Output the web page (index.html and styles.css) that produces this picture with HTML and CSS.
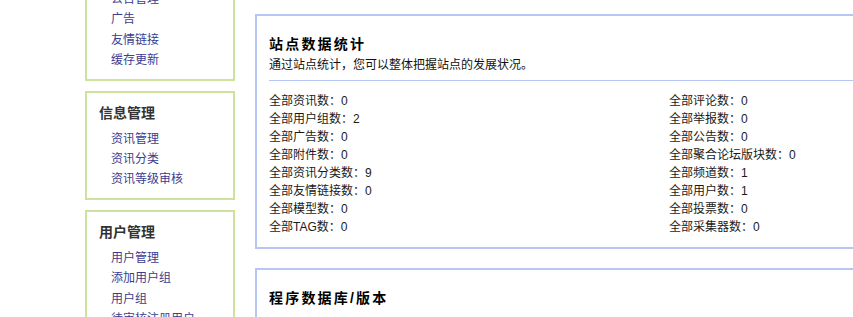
FILE: index.html
```html
<!DOCTYPE html>
<html lang="zh-CN">
<head>
<meta charset="utf-8">
<title>站点数据统计</title>
<link rel="stylesheet" href="styles.css">
</head>
<body>
<div class="page">
  <aside class="sidebar">
    <div class="menu">
      <h3 class="menu-title">系统设置</h3>
      <ul class="menu-list">
        <li><a href="#">公告管理</a></li>
        <li><a href="#">广告</a></li>
        <li><a href="#">友情链接</a></li>
        <li><a href="#">缓存更新</a></li>
      </ul>
    </div>
    <div class="menu">
      <h3 class="menu-title">信息管理</h3>
      <ul class="menu-list">
        <li><a href="#">资讯管理</a></li>
        <li><a href="#">资讯分类</a></li>
        <li><a href="#">资讯等级审核</a></li>
      </ul>
    </div>
    <div class="menu">
      <h3 class="menu-title">用户管理</h3>
      <ul class="menu-list">
        <li><a href="#">用户管理</a></li>
        <li><a href="#">添加用户组</a></li>
        <li><a href="#">用户组</a></li>
        <li><a href="#">待审核注册用户</a></li>
      </ul>
    </div>
  </aside>
  <main class="main">
    <section class="panel">
      <h2 class="panel-title">站点数据统计</h2>
      <p class="panel-desc">通过站点统计，您可以整体把握站点的发展状况。</p>
      <div class="rule"></div>
      <div class="stats">
        <div>全部资讯数：0</div><div>全部评论数：0</div>
        <div>全部用户组数：2</div><div>全部举报数：0</div>
        <div>全部广告数：0</div><div>全部公告数：0</div>
        <div>全部附件数：0</div><div>全部聚合论坛版块数：0</div>
        <div>全部资讯分类数：9</div><div>全部频道数：1</div>
        <div>全部友情链接数：0</div><div>全部用户数：1</div>
        <div>全部模型数：0</div><div>全部投票数：0</div>
        <div>全部TAG数：0</div><div>全部采集器数：0</div>
      </div>
    </section>
    <section class="panel">
      <h2 class="panel-title">程序数据库/版本</h2>
    </section>
  </main>
</div>
</body>
</html>
```

FILE: styles.css
```css
html, body {
  margin: 0;
  padding: 0;
  overflow: hidden;
  background: #fff;
}
body {
  font-family: "Liberation Sans", "Noto Sans CJK SC", sans-serif;
  font-size: 12px;
  color: #1a1a1a;
}
.page {
  display: flex;
  align-items: flex-start;
  padding-left: 85px;
}
.sidebar {
  width: 150px;
  flex: none;
  margin-top: -49px;
  display: flex;
  flex-direction: column;
  gap: 10px;
}
.menu {
  border: 2px solid #cde29c;
  padding: 10px 0 8px;
}
.menu-title {
  margin: 0 0 6px;
  padding-left: 12px;
  font-size: 14px;
  line-height: 20px;
  font-weight: bold;
  color: #333;
}
.menu-list {
  list-style: none;
  margin: 0;
  padding: 0 0 0 24px;
}
.menu-list li {
  line-height: 20.4px;
}
.menu-list a {
  color: #3c3c90;
  text-decoration: none;
}
.main {
  flex: none;
  width: 700px;
  margin-left: 20px;
  margin-top: 14px;
  display: flex;
  flex-direction: column;
  gap: 19px;
}
.panel {
  border: 2px solid #b7c6f2;
  padding: 18px 12px 11px;
  min-height: 40px;
}
.panel-title {
  margin: 0;
  font-size: 14px;
  letter-spacing: 2.2px;
  line-height: 21px;
  font-weight: bold;
  color: #000;
}
.panel-desc {
  margin: 0;
  line-height: 20px;
  color: #111;
}
.rule {
  height: 1px;
  background: #b7c6f2;
  margin: 5px 0 11px;
}
.stats {
  display: grid;
  grid-template-columns: 400px 1fr;
  line-height: 18px;
}
```
